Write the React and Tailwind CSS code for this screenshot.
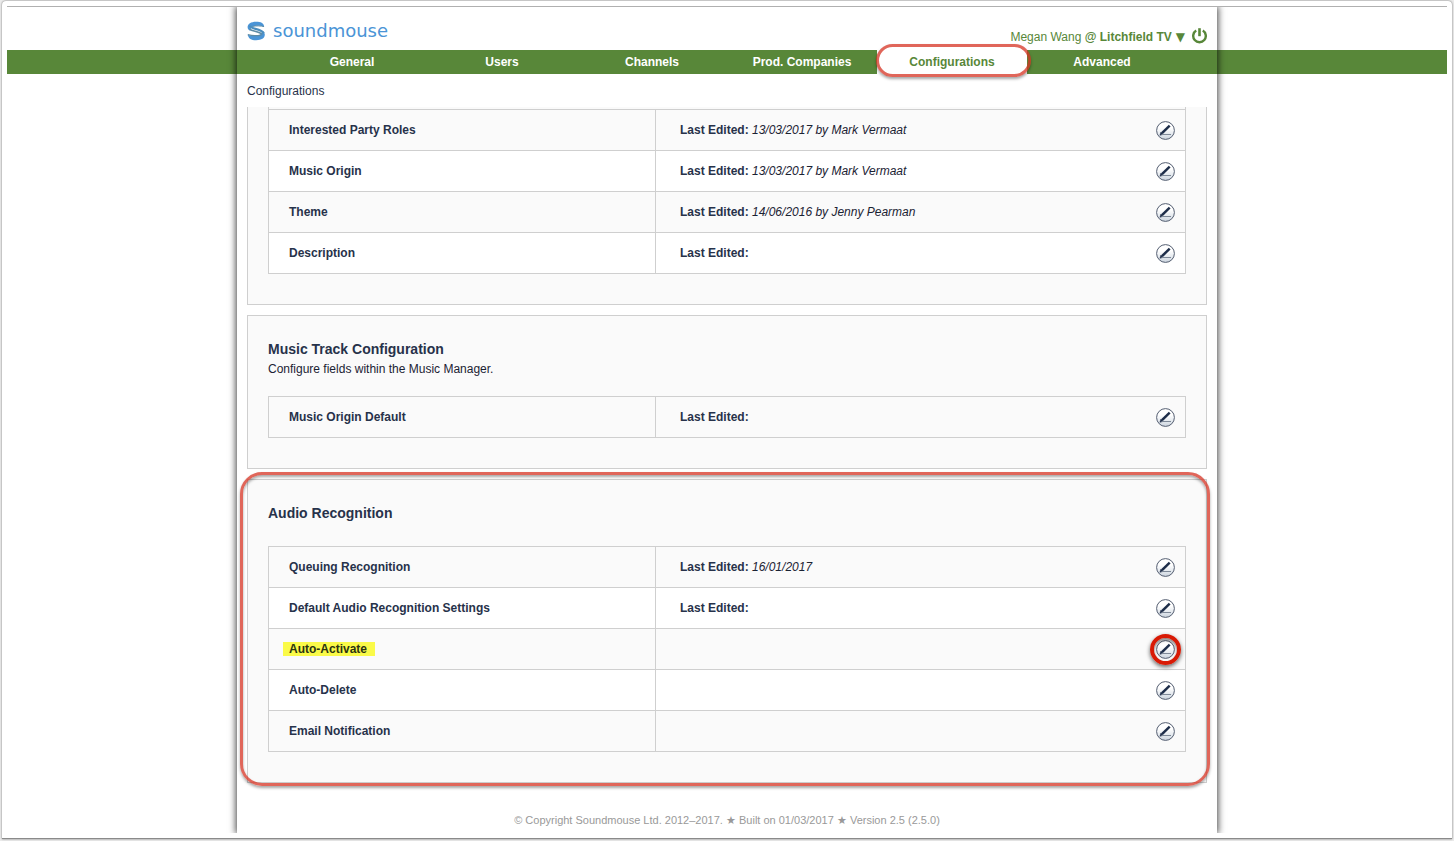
const NAV = ["General", "Users", "Channels", "Prod. Companies", "Configurations", "Advanced"];

const FIELD_ROWS = [
  { name: "Interested Party Roles", edited: "13/03/2017 by Mark Vermaat" },
  { name: "Music Origin", edited: "13/03/2017 by Mark Vermaat" },
  { name: "Theme", edited: "14/06/2016 by Jenny Pearman" },
  { name: "Description", edited: "" },
];
const TRACK_ROWS = [{ name: "Music Origin Default", edited: "" }];
const AUDIO_ROWS = [
  { name: "Queuing Recognition", edited: "16/01/2017" },
  { name: "Default Audio Recognition Settings", edited: "" },
  { name: "Auto-Activate", marked: true },
  { name: "Auto-Delete" },
  { name: "Email Notification" },
];

function LogoMark() {
  return (
    <svg width="19" height="20" viewBox="0 0 19 20" fill="none" aria-hidden="true">
      <path d="M17.300 5.600C16.600 1.900 13.800.7 9.200.7 4 .7.600 2.600.600 6.200c0 2 1.200 3 2.800 3.700 0-3 2.600-4.900 6-5.100 3.200-.2 5.600.2 7.900.8z" fill="#4a94d6" />
      <path d="M.700 13.800c.9 3.900 3.500 5.500 8.500 5.500 5.300 0 8.600-2 8.600-5.700 0-1.900-1.100-3-2.800-3.700 0 3-2.600 4.800-6 5-3.200.2-6-.4-8.300-1.100z" fill="#4a94d6" />
      <path d="M2.600 4.800c1 3.600 11.600 2.400 14.200 7.400" stroke="#4b8dbd" strokeWidth="2.200" />
      <path d="M2.600 8.200c3 2.500 9.400 1.600 12.800 5.400" stroke="#5d8ba5" strokeWidth="1.500" />
      <path d="M5.500 5.400c3-.8 8.500-.6 11.500.2" stroke="#5d8ba5" strokeWidth="1" />
      <path d="M.8 13.600c3.200 1 8.200 1.600 13.600.2" stroke="#5d8ba5" strokeWidth="1.300" />
    </svg>
  );
}

function PowerIcon() {
  return (
    <svg width="16" height="16" viewBox="0 0 16 16" fill="none" stroke="#588739" aria-hidden="true">
      <path d="M5.200 2.600a6.300 6.300 0 1 0 6.600 0" strokeWidth="2.400" />
      <path d="M8.500 .2v8" strokeWidth="2.600" />
    </svg>
  );
}

function EditIcon() {
  return (
    <svg width="19" height="19" viewBox="0 0 19 19" fill="none" aria-hidden="true">
      <defs>
        <linearGradient id="disc" x1="0" y1="0" x2="0" y2="1">
          <stop offset="0.35" stopColor="#ffffff" />
          <stop offset="1" stopColor="#ccd5df" />
        </linearGradient>
      </defs>
      <circle cx="9.500" cy="9.500" r="8.900" fill="url(#disc)" stroke="#535d70" strokeWidth="1" />
      <path d="M6 12.200L13.700 4.700" stroke="#1d2d49" strokeWidth="2.500" />
      <path d="M3.900 14.300l1-3.200 2.300 2.300z" fill="#1d2d49" stroke="#1d2d49" strokeWidth="0.500" />
      <path d="M5.500 13.500h9.500" stroke="#7e8998" strokeWidth="1" />
    </svg>
  );
}

function ConfigTable({ rows, label }) {
  return (
    <table aria-label={label} className="w-full table-fixed border-collapse text-[12px] leading-4">
      <tbody>
        {rows.map((r) => (
          <tr key={r.name} className="h-[41px] odd:bg-[#fafafa] even:bg-white">
            <th scope="row" className="w-[387px] border border-[#cfcfcf] px-5 text-left font-bold">
              {r.marked ? (
                <mark className="-mx-1.5 inline-block bg-[#fafa48] pl-1.5 pr-2 leading-[14px] text-[#2a3311]">{r.name}</mark>
              ) : (
                r.name
              )}
            </th>
            <td className="border border-[#cfcfcf] pl-6 pr-2.5">
              <div className="flex items-center justify-between">
                <span>
                  {r.edited !== undefined && (
                    <>
                      <b>Last Edited:</b> <i className="text-[#1a2233]">{r.edited}</i>
                    </>
                  )}
                </span>
                <button type="button" aria-label={"Edit " + r.name} className="relative block">
                  <EditIcon />
                  {r.marked && (
                    <span className="absolute -inset-1.5 rounded-full border-4 border-[#d81a05] shadow-[0_2px_4px_rgba(0,0,0,0.6),inset_0_2px_3px_rgba(0,0,0,0.5)]" />
                  )}
                </button>
              </div>
            </td>
          </tr>
        ))}
      </tbody>
    </table>
  );
}

export default function App() {
  return (
    <div className="min-h-screen bg-[#ebebeb] px-0.5 pb-0.5 pt-px font-['Liberation_Sans',Arial,sans-serif] text-[12px] leading-4 text-[#27324a]">
      <div className="rounded-t-sm border-b border-[#8a8a8a] bg-white px-[5px] pb-[5px] pt-[5px] shadow-[0_0_2px_rgba(0,0,0,0.6)]">
        <div className="relative overflow-hidden border-t border-[#b0b0b0]">
          <div className="absolute inset-x-0 top-[43px] h-6 bg-[#588739]" />
          <div className="relative mx-auto w-full max-w-[980px] bg-white shadow-[0_0_7px_1px_rgba(0,0,0,0.75)]">
            <header className="flex h-[43px] items-start justify-between px-2.5">
              <a href="#home" className="flex items-center gap-[7px] pt-3.5 text-[#4a94d6]">
                <LogoMark />
                <span className="font-['DejaVu_Sans',sans-serif] text-[18px] leading-5">soundmouse</span>
              </a>
              <div className="flex items-center gap-1.5 pt-5 text-[#588739]">
                <button type="button" className="flex gap-1 pt-0.5">
                  <span>
                    Megan Wang <b>@ Litchfield TV</b>
                  </span>
                  <span className="font-['DejaVu_Sans',sans-serif]">▼</span>
                </button>
                <button type="button" aria-label="Log out">
                  <PowerIcon />
                </button>
              </div>
            </header>

            <nav className="flex h-6 bg-[#588739] px-10 font-bold text-white">
              {NAV.map((n) =>
                n === "Configurations" ? (
                  <a key={n} href="#configurations" aria-current="page" className="relative flex flex-1 items-center justify-center bg-white text-[#588739]">
                    {n}
                    <span className="absolute -left-px -right-1 -top-1.5 -bottom-[3px] rounded-full border-3 border-[#d63323]/75 shadow-[0_2px_3px_rgba(0,0,0,0.35)]" />
                  </a>
                ) : (
                  <a key={n} href={"#" + n} className="flex flex-1 items-center justify-center">
                    {n}
                  </a>
                )
              )}
            </nav>

            <main className="px-2.5">
              <h1 className="pb-2 pt-[9px]">Configurations</h1>

              <section className="border border-t-0 border-[#cfcfcf] bg-[#fafafa] px-5 pb-[30px]">
                <div className="h-0.5 border-x border-[#cfcfcf]" />
                <ConfigTable label="Fields" rows={FIELD_ROWS} />
              </section>

              <section className="mt-2.5 border border-[#cfcfcf] bg-[#fafafa] px-5 pb-[30px] pt-[23px]">
                <h2 className="text-[14px] font-bold leading-5">Music Track Configuration</h2>
                <p className="mb-[19px] mt-0.5 text-[#1a2233]">Configure fields within the Music Manager.</p>
                <ConfigTable label="Music Track Configuration" rows={TRACK_ROWS} />
              </section>

              <section className="relative mt-2.5 border border-[#cfcfcf] bg-[#fafafa] px-5 pb-[30px] pt-[23px]">
                <h2 className="mb-[23px] text-[14px] font-bold leading-5">Audio Recognition</h2>
                <ConfigTable label="Audio Recognition" rows={AUDIO_ROWS} />
                <div className="pointer-events-none absolute -bottom-1 -left-2 -right-1 -top-2 rounded-[22px] border-3 border-[#d63323]/75 shadow-[0_2px_3px_rgba(0,0,0,0.35),inset_0_2px_3px_rgba(0,0,0,0.35)]" />
              </section>
            </main>

            <footer className="pb-[5px] pt-[29px] text-center text-[11px] text-[#999999]">
              © Copyright Soundmouse Ltd. 2012–2017. ★ Built on 01/03/2017 ★ Version 2.5 (2.5.0)
            </footer>
          </div>
        </div>
      </div>
    </div>
  );
}
